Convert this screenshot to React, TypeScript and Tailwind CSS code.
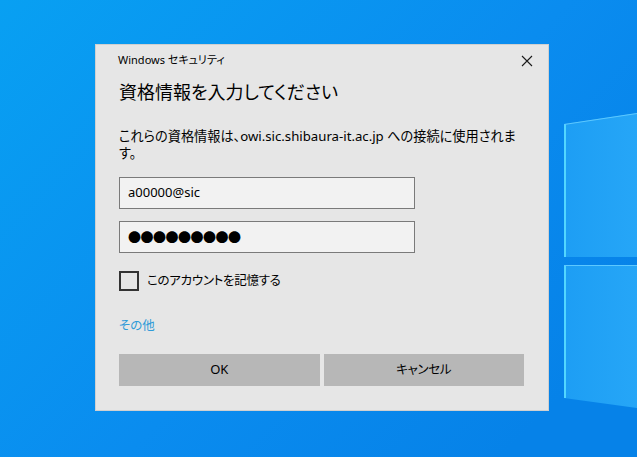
import React from "react";

const jp = "font-['Segoe_UI','Noto_Sans','Noto_Sans_CJK_JP',sans-serif] [font-feature-settings:'palt']";

const Wallpaper = () => (
  <svg className="absolute inset-0" width="637" height="457" viewBox="0 0 637 457">
    <defs>
      <linearGradient id="bg" x1="0" y1="0" x2="1" y2="0.7">
        <stop offset="0" stopColor="#08a0f2" />
        <stop offset="0.6" stopColor="#0a8cef" />
        <stop offset="1" stopColor="#0682e8" />
      </linearGradient>
      <linearGradient id="pane" x1="0" y1="0" x2="1" y2="0">
        <stop offset="0" stopColor="#1d9ef4" />
        <stop offset="1" stopColor="#26a6f7" />
      </linearGradient>
    </defs>
    <rect width="637" height="457" fill="url(#bg)" />
    <polygon points="564,124 637,113 637,257 564,257" fill="url(#pane)" />
    <polygon points="564,265 637,265 637,408 564,398" fill="url(#pane)" />
    <rect x="564" y="124" width="2" height="133" fill="#52d6ff" />
    <rect x="564" y="265" width="2" height="133" fill="#52d6ff" />
    <line x1="564" y1="124.5" x2="637" y2="113.5" stroke="#5cc8ff" strokeWidth="1" />
    <line x1="564" y1="265.5" x2="637" y2="265.5" stroke="#5cc8ff" strokeWidth="1" />
  </svg>
);

const CloseIcon = () => (
  <svg width="12" height="12" viewBox="0 0 12 12">
    <path d="M1 1 L11 11 M11 1 L1 11" stroke="#1a1a1a" strokeWidth="1.1" />
  </svg>
);

export default function App() {
  return (
    <div className="relative w-[637px] h-[457px] overflow-hidden">
      <Wallpaper />
      <div className={`absolute left-[95px] top-[44px] w-[454px] h-[367px] bg-[#e6e6e6] border border-[#d0d0d0] text-black ${jp}`}>
        <div className="flex items-center justify-between h-[31px] pl-[22px] pr-[15px]">
          <span className="text-[11px]">Windows セキュリティ</span>
          <CloseIcon />
        </div>
        <div className="pl-[23px] pr-[24px]">
          <h1 className="mt-[2px] text-[18px] leading-[28px] font-normal">資格情報を入力してください</h1>
          <p className="mt-[22px] text-[13.2px] leading-[17px] whitespace-nowrap">
            これらの資格情報は、owi.sic.shibaura-it.ac.jp への接続に使用されま
            <br />す。
          </p>
          <div className="mt-[15px] w-[296px] h-[32px] bg-[#f2f2f2] border border-[#7a7a7a] flex items-center pl-[8px] text-[13px]">
            a00000@sic
          </div>
          <div className="mt-[12px] w-[296px] h-[32px] bg-[#f2f2f2] border border-[#7a7a7a] flex items-center pl-[8px] text-[13px] font-['Noto_Sans_CJK_JP'] tracking-[-0.5px]">
            ●●●●●●●●●
          </div>
          <div className="mt-[18px] flex items-center gap-[8px]">
            <div className="w-[20px] h-[20px] border-2 border-[#333333]" />
            <span className="text-[12.5px] tracking-[-0.3px]">このアカウントを記憶する</span>
          </div>
          <div className="mt-[25px] text-[12.5px] leading-[20px] text-[#2f9bd8]">その他</div>
          <div className="mt-[18px] flex gap-[4px]">
            <button className="w-[201px] h-[32px] bg-[#b7b7b7] text-[13px]">OK</button>
            <button className="w-[201px] h-[32px] bg-[#b7b7b7] text-[12.5px] tracking-[-0.3px]">キャンセル</button>
          </div>
        </div>
      </div>
    </div>
  );
}
